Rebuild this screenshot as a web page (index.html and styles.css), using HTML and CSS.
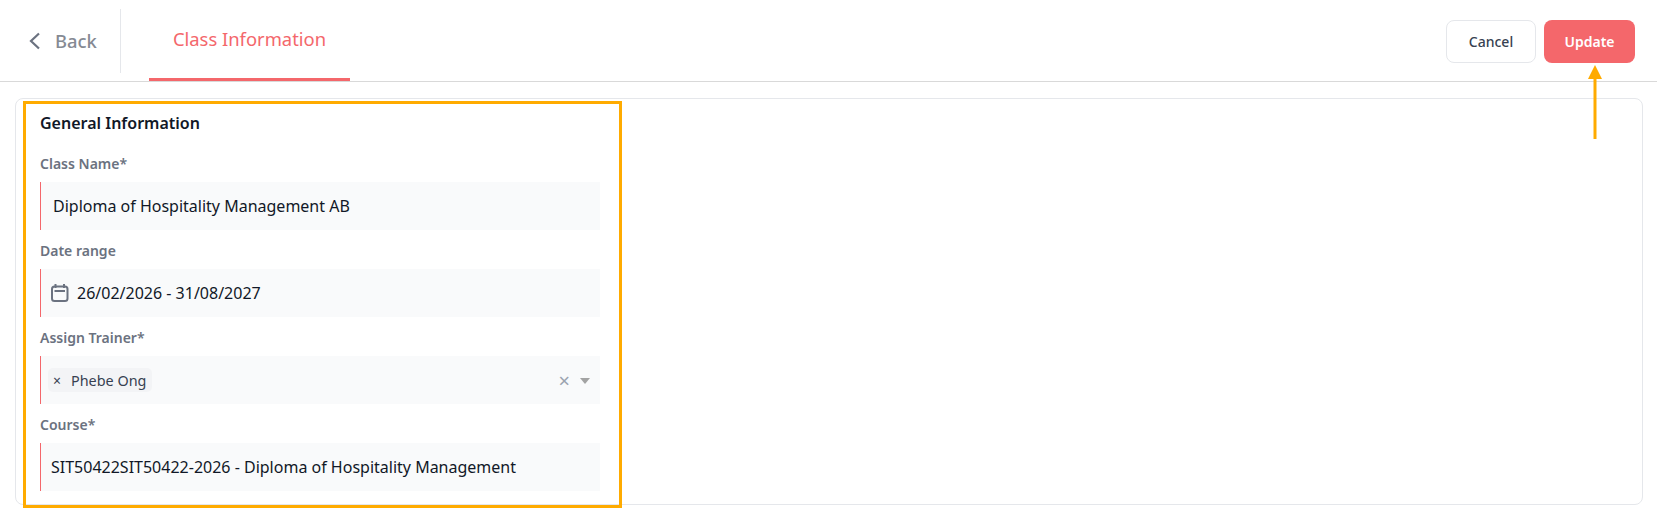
FILE: index.html
```html
<!DOCTYPE html>
<html lang="en">
<head>
  <meta charset="UTF-8">
  <title>Class Information</title>
  <link rel="stylesheet" href="styles.css">
</head>
<body>

  <!-- Top bar -->
  <div class="topbar">
    <div class="back">
      <svg class="back-icon" width="14" height="20" viewBox="0 0 14 20"><path d="M12 2.5 L4 10 L12 17.5" fill="none" stroke="#6b7280" stroke-width="2.2"/></svg>
      <span class="back-text">Back</span>
    </div>
    <div class="tab">Class Information</div>
    <div class="actions">
      <button class="btn btn-cancel">Cancel</button>
      <button class="btn btn-update">Update</button>
    </div>
  </div>

  <!-- Form card -->
  <div class="card">
    <h2>General Information</h2>

    <div class="label">Class Name*</div>
    <div class="field field-name">Diploma of Hospitality Management AB</div>

    <div class="label">Date range</div>
    <div class="field field-date">
      <svg width="18" height="18" viewBox="0 0 18 18" fill="none" stroke="#6b7280" stroke-width="2"><rect x="1" y="2.5" width="15.5" height="14.5" rx="2.5"/><path d="M4.5 0v4M13 0v4M3.5 7h10.5"/></svg>
      <span>26/02/2026 - 31/08/2027</span>
    </div>

    <div class="label">Assign Trainer*</div>
    <div class="field field-select">
      <div class="tag"><span class="tag-x">×</span><span>Phebe Ong</span></div>
      <span class="clear">×</span>
      <span class="caret"></span>
    </div>

    <div class="label">Course*</div>
    <div class="field field-course">SIT50422SIT50422-2026 - Diploma of Hospitality Management</div>
  </div>

  <!-- Annotations -->
  <div class="highlight"></div>
  <svg class="arrow" width="16" height="76" viewBox="0 0 16 76"><path d="M8 12V75" stroke="#ffab00" stroke-width="3"/><path d="M1 15 L8 1 L15 15 Z" fill="#ffab00"/></svg>

</body>
</html>
```

FILE: styles.css
```css
body {
  font-family: "Noto Sans", sans-serif;
  margin: 0;
  padding: 0;
  background-color: white;
  color: #111827;
  position: relative;
  height: 509px;
  overflow: hidden;
}
.topbar {
  display: flex;
  height: 81px;
  border-bottom: 1px solid #d9d9d9;
  padding: 0 22px 0 27px;
}
.back {
  width: 93px;
  height: 64px;
  margin-top: 9px;
  border-right: 1px solid #e5e7eb;
  display: flex;
  align-items: center;
  gap: 14px;
  color: #858a93;
  font-size: 18.4px;
  font-weight: 500;
}
.back-text {
  margin-bottom: 2px;
}
.tab {
  margin-left: 28px;
  width: 201px;
  height: 78px;
  border-bottom: 3px solid #f4676b;
  text-align: center;
  color: #f4676b;
  font-size: 18.4px;
  line-height: 78px;
}
.actions {
  margin-left: auto;
  display: flex;
  gap: 8px;
  padding-top: 20px;
}
.btn {
  font-family: inherit;
  font-size: 14px;
  font-weight: 500;
  height: 43px;
  border-radius: 8px;
  cursor: pointer;
}
.btn-cancel {
  width: 90px;
  background-color: white;
  border: 1px solid #e5e7eb;
  color: #374151;
}
.btn-update {
  width: 91px;
  background-color: #f4676b;
  border: none;
  color: white;
  font-weight: 600;
}
.card {
  margin: 16px 14px 0 15px;
  height: 407px;
  box-sizing: border-box;
  border: 1px solid #e5e7eb;
  border-radius: 8px;
  padding: 14px 24px;
  width: 1628px;
}
.card h2 {
  margin: 0 0 20px;
  font-size: 16px;
  font-weight: 600;
  line-height: 21px;
  color: #111827;
}
.label {
  font-size: 14px;
  font-weight: 600;
  line-height: 20px;
  color: #6b7280;
  margin-bottom: 8px;
}
.field {
  width: 560px;
  height: 48px;
  box-sizing: border-box;
  background-color: #f9fafb;
  border-left: 1px solid #f4676b;
  display: flex;
  align-items: center;
  font-size: 16px;
  margin-bottom: 11px;
}
.field-name {
  padding-left: 12px;
}
.field-date {
  padding-left: 10px;
  gap: 8px;
}
.field-select {
  padding: 0 10px 0 7px;
}
.field-course {
  padding-left: 10px;
  margin-bottom: 0;
}
.tag {
  display: flex;
  align-items: center;
  gap: 10px;
  height: 24px;
  padding: 0 6px 0 5px;
  background-color: #f3f4f6;
  border-radius: 5px;
  font-size: 14.4px;
  color: #374151;
}
.tag-x {
  font-size: 14px;
}
.clear {
  margin-left: auto;
  font-size: 20px;
  color: #9ca3af;
}
.caret {
  margin: 2px 0 0 10px;
  width: 0;
  height: 0;
  border-left: 5.5px solid transparent;
  border-right: 5.5px solid transparent;
  border-top: 6px solid #a3a3a3;
}
.highlight {
  position: absolute;
  left: 23px;
  top: 101px;
  width: 599px;
  height: 407px;
  box-sizing: border-box;
  border: 3px solid #ffab00;
}
.arrow {
  position: absolute;
  left: 1587px;
  top: 64px;
}
```
